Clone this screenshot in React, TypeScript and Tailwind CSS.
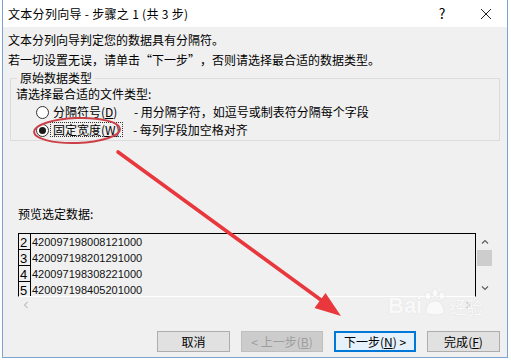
import React from 'react';

const cjk = "font-['Noto_Sans_CJK_SC','Microsoft_YaHei',sans-serif]";

const rows = [
  ['2', '420097198008121000'],
  ['3', '420097198201291000'],
  ['4', '420097198308221000'],
  ['5', '420097198405201000'],
];

function Acc({ k }: { k: string }) {
  return (
    <>
      (<span className="underline underline-offset-1">{k}</span>)
    </>
  );
}

function Radio({ checked }: { checked?: boolean }) {
  return (
    <span className="w-[13px] h-[13px] rounded-full border border-[#333] bg-white flex items-center justify-center shrink-0">
      {checked && <span className="w-[7px] h-[7px] rounded-full bg-[#1a1a1a]" />}
    </span>
  );
}

function Chevron({ dir, className }: { dir: 'up' | 'down' | 'left' | 'right'; className?: string }) {
  const d = {
    up: 'M1 6 L5 2 L9 6',
    down: 'M1 2 L5 6 L9 2',
    left: 'M6 1 L2 5 L6 9',
    right: 'M2 1 L6 5 L2 9',
  }[dir];
  const vb = dir === 'up' || dir === 'down' ? '0 0 10 8' : '0 0 8 10';
  return (
    <svg viewBox={vb} className={className} fill="none" stroke="currentColor" strokeWidth="1.6">
      <path d={d} />
    </svg>
  );
}

export default function App() {
  return (
    <div className={`relative w-[511px] h-[362px] bg-white overflow-hidden text-black ${cjk}`}>
      <div className="ml-[2px] w-[506px] h-[358px] border-x border-b border-[#7aa2d4] flex flex-col">
        {/* title bar */}
        <div className="h-[27px] bg-white flex items-center text-[12px] leading-[27px]">
          <span className="pl-[5px] flex-1 tracking-[0.3px]">文本分列向导 - 步骤之 1 (共 3 步)</span>
          <span className="w-[46px] text-center text-[14px]">?</span>
          <span className="w-[42px] flex justify-center">
            <svg viewBox="0 0 10 10" className="w-[10px] h-[10px]" stroke="#222" strokeWidth="1">
              <path d="M0 0 L10 10 M10 0 L0 10" />
            </svg>
          </span>
        </div>

        {/* body */}
        <div className="flex-1 bg-[#f0f0f0] px-[5px] pt-[3px] text-[12px] flex flex-col">
          <div className="leading-[20px]">文本分列向导判定您的数据具有分隔符。</div>
          <div className="leading-[20px] flex">
            若一切设置无误，请单击
            <span className="inline-block w-[12px] text-right">“</span>
            下一步
            <span className="inline-block w-[12px] text-left">”</span>
            ，否则请选择最合适的数据类型。
          </div>

          <fieldset className="ml-[2px] mr-[2px] border border-[#dcdcdc] px-[6px] pb-[1px]">
            <legend className="px-[3px] leading-[16px]">原始数据类型</legend>
            <div className="leading-[16px] -ml-[1px]">请选择最合适的文件类型:</div>
            <div className="mt-[1px] h-[18px] flex items-center pl-[19px]">
              <Radio />
              <span className="ml-[4px] w-[81px]">
                分隔符号<Acc k="D" />
              </span>
              <span>- 用分隔字符，如逗号或制表符分隔每个字段</span>
            </div>
            <div className="h-[18px] flex items-center pl-[19px]">
              <Radio checked />
              <span className="ml-[1px] w-[83px]">
                <span className="border border-dotted border-[#333] px-[2px] leading-[13px] inline-block">
                  固定宽度<Acc k="W" />
                </span>
              </span>
              <span>- 每列字段加空格对齐</span>
            </div>
          </fieldset>

          <div className="mt-[65px] pl-[10px] leading-[16px]">预览选定数据:</div>

          <div className="mt-[11px] pl-[10px] flex">
            <div className="w-[458px]">
              <div className="h-[64px] border-t border-x border-black border-b border-b-white overflow-hidden">
                {rows.map(([n, v]) => (
                  <div key={n} className="flex h-[16px]">
                    <div className="w-[12px] h-[16px] border-r border-b border-black text-[13px] leading-[14px] pl-[1px] pt-[2px] font-['Liberation_Sans',sans-serif]">
                      {n}
                    </div>
                    <div className="pl-[1px] text-[11px] leading-[16px] text-[#111] font-['Liberation_Sans',sans-serif]">
                      {v}
                    </div>
                  </div>
                ))}
              </div>
              <div className="h-[16px] flex items-center justify-between px-[5px] text-[#c4c4c4]">
                <Chevron dir="left" className="w-[6px] h-[8px]" />
                <Chevron dir="right" className="w-[6px] h-[8px]" />
              </div>
            </div>
            <div className="ml-[1px] w-[15px] h-[64px] flex flex-col items-center text-[#606060]">
              <div className="h-[17px] flex items-center">
                <Chevron dir="up" className="w-[8px] h-[6px]" />
              </div>
              <div className="w-[15px] h-[16px] bg-[#cdcdcd]" />
              <div className="flex-1 flex items-end pb-[6px]">
                <Chevron dir="down" className="w-[8px] h-[6px]" />
              </div>
            </div>
          </div>

          <div className="mt-[18px] mr-[2px] flex justify-end gap-[11px] text-[12px]">
            <button className="w-[73px] h-[21px] bg-[#e1e1e1] border border-[#adadad] leading-[19px]">取消</button>
            <button className="w-[82px] h-[21px] bg-[#cccccc] border border-[#bfbfbf] text-[#9d9d9d] leading-[19px]">
              &lt; 上一步<Acc k="B" />
            </button>
            <button className="w-[82px] h-[21px] bg-[#e5f1fb] border-2 border-[#0078d7] leading-[17px]">
              下一步<Acc k="N" /> &gt;
            </button>
            <button className="w-[73px] h-[21px] bg-[#e1e1e1] border border-[#adadad] leading-[19px]">
              完成<Acc k="F" />
            </button>
          </div>
        </div>
      </div>

      {/* Baidu watermark */}
      <div className="absolute left-[388px] top-[288px] flex items-end text-white opacity-60 [text-shadow:0_0_1px_#c8c8c8] pointer-events-none">
        <span className="font-['Liberation_Sans',sans-serif] font-bold text-[22px] leading-[24px]">Bai</span>
        <svg viewBox="0 0 26 30" className="w-[26px] h-[30px]" fill="white" stroke="#d6d6d6" strokeWidth="0.6">
          <ellipse cx="6" cy="8" rx="3" ry="4" />
          <ellipse cx="13" cy="5" rx="3" ry="4" />
          <ellipse cx="20" cy="8" rx="3" ry="4" />
          <path d="M4 24 C4 16 9 13 13 13 C17 13 22 16 22 24 C22 28 4 28 4 24 Z" />
        </svg>
        <span className="text-[17px] leading-[22px] ml-[1px]">经验</span>
      </div>

      {/* red annotations */}
      <svg className="absolute inset-0 pointer-events-none" width="511" height="362" viewBox="0 0 511 362">
        <ellipse cx="77" cy="130.5" rx="43" ry="12.5" fill="none" stroke="#cc3f47" strokeWidth="2" transform="rotate(-2 77 130.5)" />
        <line x1="118" y1="152" x2="321" y2="300" stroke="#e8383d" strokeWidth="3.6" strokeLinecap="round" />
        <polygon points="341,316 314.5,308 325.5,293" fill="#e8383d" />
      </svg>
    </div>
  );
}
